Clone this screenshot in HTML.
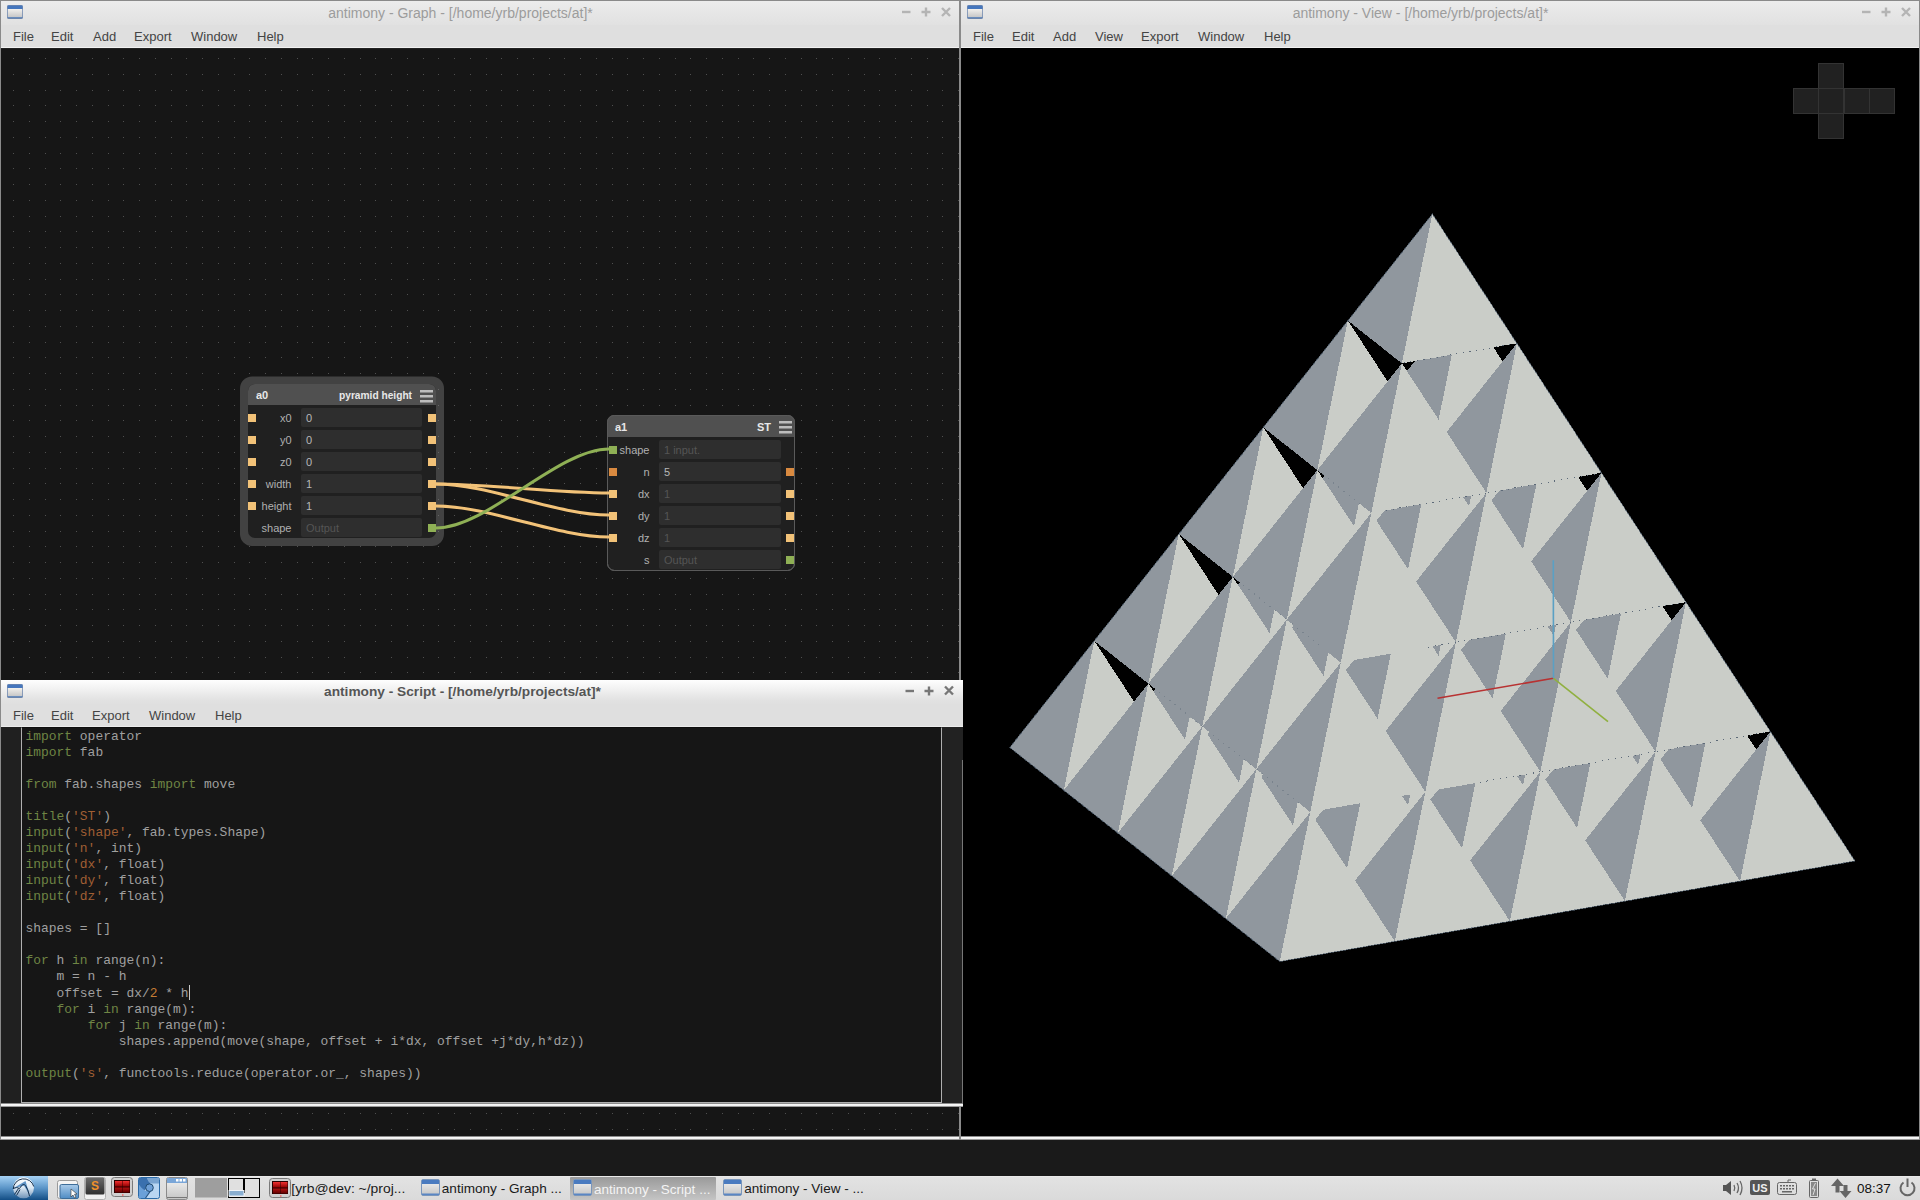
<!DOCTYPE html>
<html><head><meta charset="utf-8">
<style>
*{box-sizing:border-box;margin:0;padding:0}
html,body{width:1920px;height:1200px;overflow:hidden;background:#1a1a1a;font-family:"Liberation Sans",sans-serif;position:relative}
.abs{position:absolute}
.win{position:absolute;background:#dfdfdf;overflow:hidden}
.title{position:absolute;left:0;right:0;top:0;height:24px;background:linear-gradient(#ececec,#e1e1e1)}
.menu{position:absolute;left:0;right:0;top:24px;height:23px;background:#dfdfdf;border-bottom:1px solid #f2f2f2}
.ticon{position:absolute;left:6px;top:4px;width:16px;height:14px;border-radius:2px;background:linear-gradient(#4576bd 0,#4576bd 4px,#f2f0ec 4px,#c8c8c8 12px,#6a92c8 12px,#6a7c96 14px);box-shadow:0 0 0 1px rgba(110,135,175,0.75) inset}
.ttext{position:absolute;top:4px;left:24px;right:63px;text-align:center;font-size:14px;line-height:16px;color:#9c9c9c;white-space:nowrap}
.tb{position:absolute;top:0;width:16px;height:24px}
.mi{position:absolute;top:4px;font-size:13px;line-height:15px;color:#444}
.handle{position:absolute;left:0;right:0;height:4px;background:linear-gradient(#8c8c8c 0,#8c8c8c 1px,#fafafa 1px,#f0f0f0 3px,#9a9a9a 3px)}
pre.code{position:absolute;left:25.5px;top:729px;font-family:"Liberation Mono",monospace;font-size:12.95px;line-height:16px;color:#c6c6c6;white-space:pre}
.cur{display:inline-block;width:1px;height:15px;background:#c8c8c8;vertical-align:-3px}
</style></head>
<body>
<!-- Graph window -->
<div class="win" style="left:0;top:0;width:960px;height:1140px;border-left:1px solid #8a8a8a;border-top:1px solid #8a8a8a;border-right:1px solid #8a8a8a">
  <div class="title"><div class="ticon"></div><div class="ttext">antimony - Graph - [/home/yrb/projects/at]*</div>
    <svg class="abs" style="left:896px;top:3px" width="60" height="18"><g stroke="#b4b4b4" stroke-width="2.4" fill="none"><path d="M5 8h8.5"/><path d="M29 3.5v9M24.5 8h9"/><path d="M45 4l8 8M53 4l-8 8"/></g></svg>
  </div>
  <div class="menu">
    <span class="mi" style="left:12px">File</span><span class="mi" style="left:50px">Edit</span><span class="mi" style="left:92px">Add</span><span class="mi" style="left:133px">Export</span><span class="mi" style="left:190px">Window</span><span class="mi" style="left:256px">Help</span>
  </div>
  <div class="handle" style="top:1135px"></div>
</div>
<svg class="abs" style="left:0;top:0" width="960" height="1136" font-family="Liberation Sans, sans-serif">
<defs><pattern id="dots" x="13" y="58" width="63" height="63" patternUnits="userSpaceOnUse"><rect x="0" y="0" width="1" height="1" fill="#505050"/><rect x="0" y="16" width="1" height="1" fill="#505050"/><rect x="0" y="32" width="1" height="1" fill="#505050"/><rect x="0" y="47" width="1" height="1" fill="#505050"/><rect x="16" y="0" width="1" height="1" fill="#505050"/><rect x="16" y="16" width="1" height="1" fill="#505050"/><rect x="16" y="32" width="1" height="1" fill="#505050"/><rect x="16" y="47" width="1" height="1" fill="#505050"/><rect x="32" y="0" width="1" height="1" fill="#505050"/><rect x="32" y="16" width="1" height="1" fill="#505050"/><rect x="32" y="32" width="1" height="1" fill="#505050"/><rect x="32" y="47" width="1" height="1" fill="#505050"/><rect x="47" y="0" width="1" height="1" fill="#505050"/><rect x="47" y="16" width="1" height="1" fill="#505050"/><rect x="47" y="32" width="1" height="1" fill="#505050"/><rect x="47" y="47" width="1" height="1" fill="#505050"/></pattern></defs>
<rect x="1" y="48" width="958" height="1088" fill="#161616"/>
<rect x="1" y="48" width="958" height="1" fill="#222"/>
<rect x="1" y="49" width="958" height="1087" fill="url(#dots)"/>
<rect x="240.0" y="376.5" width="204.0" height="169.5" rx="12" fill="rgba(128,128,128,0.42)"/>
<rect x="248" y="384" width="188" height="154" rx="7" fill="#202020"/>

<clipPath id="ca0"><rect x="248" y="384" width="188" height="154" rx="7"/></clipPath>
<rect x="248" y="384" width="188" height="21" fill="#505050" clip-path="url(#ca0)"/>
<text x="256.0" y="399.0" font-size="11" font-weight="bold" fill="#e8e8e8">a0</text>
<text x="412.0" y="399.0" font-size="11" font-weight="bold" fill="#e8e8e8" text-anchor="end" textLength="73" lengthAdjust="spacingAndGlyphs">pyramid height</text>
<rect x="420" y="390" width="13" height="2.5" fill="#bdbdbd"/>
<rect x="420" y="395" width="13" height="2.5" fill="#bdbdbd"/>
<rect x="420" y="400" width="13" height="2.5" fill="#bdbdbd"/>
<rect x="301" y="408" width="121" height="19" rx="2" fill="#2e2e2e"/>
<text x="291.5" y="421.5" font-size="11" fill="#b0b0b0" text-anchor="end">x0</text>
<text x="306.0" y="421.5" font-size="11" fill="#b8b8b8">0</text>
<rect x="248" y="414" width="8" height="8" fill="#f2c278"/>
<rect x="428" y="414" width="8" height="8" fill="#f2c278"/>
<rect x="301" y="430" width="121" height="19" rx="2" fill="#2e2e2e"/>
<text x="291.5" y="443.5" font-size="11" fill="#b0b0b0" text-anchor="end">y0</text>
<text x="306.0" y="443.5" font-size="11" fill="#b8b8b8">0</text>
<rect x="248" y="436" width="8" height="8" fill="#f2c278"/>
<rect x="428" y="436" width="8" height="8" fill="#f2c278"/>
<rect x="301" y="452" width="121" height="19" rx="2" fill="#2e2e2e"/>
<text x="291.5" y="465.5" font-size="11" fill="#b0b0b0" text-anchor="end">z0</text>
<text x="306.0" y="465.5" font-size="11" fill="#b8b8b8">0</text>
<rect x="248" y="458" width="8" height="8" fill="#f2c278"/>
<rect x="428" y="458" width="8" height="8" fill="#f2c278"/>
<rect x="301" y="474" width="121" height="19" rx="2" fill="#2e2e2e"/>
<text x="291.5" y="487.5" font-size="11" fill="#b0b0b0" text-anchor="end">width</text>
<text x="306.0" y="487.5" font-size="11" fill="#b8b8b8">1</text>
<rect x="248" y="480" width="8" height="8" fill="#f2c278"/>
<rect x="428" y="480" width="8" height="8" fill="#f2c278"/>
<rect x="301" y="496" width="121" height="19" rx="2" fill="#2e2e2e"/>
<text x="291.5" y="509.5" font-size="11" fill="#b0b0b0" text-anchor="end">height</text>
<text x="306.0" y="509.5" font-size="11" fill="#b8b8b8">1</text>
<rect x="248" y="502" width="8" height="8" fill="#f2c278"/>
<rect x="428" y="502" width="8" height="8" fill="#f2c278"/>
<rect x="301" y="518" width="121" height="19" rx="2" fill="#2e2e2e"/>
<text x="291.5" y="531.5" font-size="11" fill="#b0b0b0" text-anchor="end">shape</text>
<text x="306.0" y="531.5" font-size="11" fill="#555">Output</text>
<rect x="428" y="524" width="8" height="8" fill="#8fb055"/>
<rect x="607.5" y="415.5" width="187.0" height="155.0" rx="7" fill="#202020" stroke="#5a5a5a" stroke-width="1"/>

<clipPath id="ca1"><rect x="607" y="415" width="188" height="156" rx="7"/></clipPath>
<rect x="607" y="415" width="188" height="22" fill="#505050" clip-path="url(#ca1)"/>
<rect x="607.5" y="415.5" width="187.0" height="155.0" rx="7" fill="none" stroke="#5a5a5a" stroke-width="1"/>
<text x="615.0" y="431.0" font-size="11" font-weight="bold" fill="#e8e8e8">a1</text>
<text x="771.0" y="431.0" font-size="11" font-weight="bold" fill="#e8e8e8" text-anchor="end">ST</text>
<rect x="779" y="421" width="13" height="2.5" fill="#bdbdbd"/>
<rect x="779" y="426" width="13" height="2.5" fill="#bdbdbd"/>
<rect x="779" y="431" width="13" height="2.5" fill="#bdbdbd"/>
<rect x="659" y="440" width="122" height="19" rx="2" fill="#2e2e2e"/>
<text x="649.5" y="453.5" font-size="11" fill="#b0b0b0" text-anchor="end">shape</text>
<text x="664.0" y="453.5" font-size="11" fill="#555">1 input.</text>
<rect x="609" y="446" width="8" height="8" fill="#8fb055"/>
<rect x="659" y="462" width="122" height="19" rx="2" fill="#2e2e2e"/>
<text x="649.5" y="475.5" font-size="11" fill="#b0b0b0" text-anchor="end">n</text>
<text x="664.0" y="475.5" font-size="11" fill="#b8b8b8">5</text>
<rect x="609" y="468" width="8" height="8" fill="#d98a40"/>
<rect x="786" y="468" width="8" height="8" fill="#d98a40"/>
<rect x="659" y="484" width="122" height="19" rx="2" fill="#2e2e2e"/>
<text x="649.5" y="497.5" font-size="11" fill="#b0b0b0" text-anchor="end">dx</text>
<text x="664.0" y="497.5" font-size="11" fill="#555">1</text>
<rect x="609" y="490" width="8" height="8" fill="#f2c278"/>
<rect x="786" y="490" width="8" height="8" fill="#f2c278"/>
<rect x="659" y="506" width="122" height="19" rx="2" fill="#2e2e2e"/>
<text x="649.5" y="519.5" font-size="11" fill="#b0b0b0" text-anchor="end">dy</text>
<text x="664.0" y="519.5" font-size="11" fill="#555">1</text>
<rect x="609" y="512" width="8" height="8" fill="#f2c278"/>
<rect x="786" y="512" width="8" height="8" fill="#f2c278"/>
<rect x="659" y="528" width="122" height="19" rx="2" fill="#2e2e2e"/>
<text x="649.5" y="541.5" font-size="11" fill="#b0b0b0" text-anchor="end">dz</text>
<text x="664.0" y="541.5" font-size="11" fill="#555">1</text>
<rect x="609" y="534" width="8" height="8" fill="#f2c278"/>
<rect x="786" y="534" width="8" height="8" fill="#f2c278"/>
<rect x="659" y="550" width="122" height="19" rx="2" fill="#2e2e2e"/>
<text x="649.5" y="563.5" font-size="11" fill="#b0b0b0" text-anchor="end">s</text>
<text x="664.0" y="563.5" font-size="11" fill="#555">Output</text>
<rect x="786" y="556" width="8" height="8" fill="#8fb055"/>
<path d="M436.0 484.0 C487.9 484.0 557.1 493.0 609.0 493.0" fill="none" stroke="#f2c278" stroke-width="3"/>
<path d="M436.0 484.0 C487.9 484.0 557.1 515.0 609.0 515.0" fill="none" stroke="#f2c278" stroke-width="3"/>
<path d="M436.0 506.0 C487.9 506.0 557.1 537.0 609.0 537.0" fill="none" stroke="#f2c278" stroke-width="3"/>
<path d="M436.0 528.0 C487.9 528.0 557.1 449.0 609.0 449.0" fill="none" stroke="#8fb055" stroke-width="3"/>
</svg>
<!-- View window -->
<div class="win" style="left:960px;top:0;width:960px;height:1140px;border-left:1px solid #8a8a8a;border-top:1px solid #8a8a8a;border-right:1px solid #8a8a8a">
  <div class="title"><div class="ticon"></div><div class="ttext">antimony - View - [/home/yrb/projects/at]*</div>
    <svg class="abs" style="left:896px;top:3px" width="60" height="18"><g stroke="#b4b4b4" stroke-width="2.4" fill="none"><path d="M5 8h8.5"/><path d="M29 3.5v9M24.5 8h9"/><path d="M45 4l8 8M53 4l-8 8"/></g></svg>
  </div>
  <div class="menu">
    <span class="mi" style="left:12px">File</span><span class="mi" style="left:51px">Edit</span><span class="mi" style="left:92px">Add</span><span class="mi" style="left:134px">View</span><span class="mi" style="left:180px">Export</span><span class="mi" style="left:237px">Window</span><span class="mi" style="left:303px">Help</span>
  </div>
  <div class="abs" style="left:0;top:47px;width:958px;height:1088px;background:#000"></div>
  <div class="handle" style="top:1135px"></div>
</div>
<svg class="abs" style="left:961px;top:48px" width="958" height="1088" viewBox="961 48 958 1088" shape-rendering="crispEdges">
<polygon fill="#90979e" points="1470.0,667.0 1524.0,709.8 1554.5,560.4"/>
<polygon fill="#cacdc8" points="1639.0,689.8 1524.0,709.8 1554.5,560.4"/>
<polygon fill="#90979e" points="1354.9,687.1 1408.9,729.9 1439.5,580.5"/>
<polygon fill="#cacdc8" points="1524.0,709.8 1408.9,729.9 1439.5,580.5"/>
<polygon fill="#90979e" points="1239.9,707.2 1293.9,750.0 1324.4,600.6"/>
<polygon fill="#cacdc8" points="1408.9,729.9 1293.9,750.0 1324.4,600.6"/>
<polygon fill="#90979e" points="1524.0,709.8 1578.0,752.6 1608.5,603.1"/>
<polygon fill="#cacdc8" points="1693.0,732.5 1578.0,752.6 1608.5,603.1"/>
<polygon fill="#90979e" points="1439.5,580.5 1493.5,623.2 1524.0,473.7"/>
<polygon fill="#cacdc8" points="1608.5,603.1 1493.5,623.2 1524.0,473.7"/>
<polygon fill="#90979e" points="1124.8,727.4 1178.8,770.1 1209.3,620.6"/>
<polygon fill="#cacdc8" points="1293.9,750.0 1178.8,770.1 1209.3,620.6"/>
<polygon fill="#90979e" points="1408.9,729.9 1462.9,772.8 1493.5,623.2"/>
<polygon fill="#cacdc8" points="1578.0,752.6 1462.9,772.8 1493.5,623.2"/>
<polygon fill="#90979e" points="1324.4,600.6 1378.4,643.4 1408.9,493.8"/>
<polygon fill="#cacdc8" points="1493.5,623.2 1378.4,643.4 1408.9,493.8"/>
<polygon fill="#90979e" points="1009.8,747.5 1063.8,790.2 1094.3,640.8"/>
<polygon fill="#cacdc8" points="1178.8,770.1 1063.8,790.2 1094.3,640.8"/>
<polygon fill="#90979e" points="1293.9,750.0 1347.9,792.8 1378.4,643.4"/>
<polygon fill="#cacdc8" points="1462.9,772.8 1347.9,792.8 1378.4,643.4"/>
<polygon fill="#90979e" points="1578.0,752.6 1632.0,795.4 1662.5,646.0"/>
<polygon fill="#cacdc8" points="1747.0,775.4 1632.0,795.4 1662.5,646.0"/>
<polygon fill="#90979e" points="1209.3,620.6 1263.3,663.4 1293.9,513.9"/>
<polygon fill="#cacdc8" points="1378.4,643.4 1263.3,663.4 1293.9,513.9"/>
<polygon fill="#90979e" points="1493.5,623.2 1547.5,666.1 1578.0,516.5"/>
<polygon fill="#cacdc8" points="1662.5,646.0 1547.5,666.1 1578.0,516.5"/>
<polygon fill="#90979e" points="1408.9,493.8 1462.9,536.6 1493.5,387.1"/>
<polygon fill="#cacdc8" points="1578.0,516.5 1462.9,536.6 1493.5,387.1"/>
<polygon fill="#90979e" points="1178.8,770.1 1232.8,813.0 1263.3,663.4"/>
<polygon fill="#cacdc8" points="1347.9,792.8 1232.8,813.0 1263.3,663.4"/>
<polygon fill="#90979e" points="1462.9,772.8 1516.9,815.5 1547.5,666.1"/>
<polygon fill="#cacdc8" points="1632.0,795.4 1516.9,815.5 1547.5,666.1"/>
<polygon fill="#90979e" points="1094.3,640.8 1148.3,683.5 1178.8,534.0"/>
<polygon fill="#cacdc8" points="1263.3,663.4 1148.3,683.5 1178.8,534.0"/>
<path d="M1094.3 640.8L1148.3 683.5" stroke="#5d6a78" stroke-width="1" opacity="0.45" stroke-dasharray="1.2 5.5" fill="none"/>
<polygon fill="#90979e" points="1378.4,643.4 1432.4,686.2 1462.9,536.6"/>
<polygon fill="#cacdc8" points="1547.5,666.1 1432.4,686.2 1462.9,536.6"/>
<polygon fill="#90979e" points="1293.9,513.9 1347.9,556.7 1378.4,407.2"/>
<polygon fill="#cacdc8" points="1462.9,536.6 1347.9,556.7 1378.4,407.2"/>
<polygon fill="#90979e" points="1063.8,790.2 1117.8,833.0 1148.3,683.5"/>
<polygon fill="#cacdc8" points="1232.8,813.0 1117.8,833.0 1148.3,683.5"/>
<polygon fill="#90979e" points="1347.9,792.8 1401.9,835.6 1432.4,686.2"/>
<polygon fill="#cacdc8" points="1516.9,815.5 1401.9,835.6 1432.4,686.2"/>
<polygon fill="#90979e" points="1632.0,795.4 1686.0,838.2 1716.5,688.8"/>
<polygon fill="#cacdc8" points="1801.0,818.1 1686.0,838.2 1716.5,688.8"/>
<polygon fill="#90979e" points="1263.3,663.4 1317.3,706.2 1347.9,556.7"/>
<polygon fill="#cacdc8" points="1432.4,686.2 1317.3,706.2 1347.9,556.7"/>
<polygon fill="#90979e" points="1547.5,666.1 1601.5,708.9 1632.0,559.3"/>
<polygon fill="#cacdc8" points="1716.5,688.8 1601.5,708.9 1632.0,559.3"/>
<polygon fill="#90979e" points="1178.8,534.0 1232.8,576.9 1263.3,427.3"/>
<polygon fill="#cacdc8" points="1347.9,556.7 1232.8,576.9 1263.3,427.3"/>
<path d="M1178.8 534.0L1232.8 576.9" stroke="#5d6a78" stroke-width="1" opacity="0.45" stroke-dasharray="1.2 5.5" fill="none"/>
<polygon fill="#90979e" points="1462.9,536.6 1516.9,579.4 1547.5,430.0"/>
<polygon fill="#cacdc8" points="1632.0,559.3 1516.9,579.4 1547.5,430.0"/>
<polygon fill="#90979e" points="1232.8,813.0 1286.8,855.8 1317.3,706.2"/>
<polygon fill="#cacdc8" points="1401.9,835.6 1286.8,855.8 1317.3,706.2"/>
<polygon fill="#90979e" points="1516.9,815.5 1570.9,858.3 1601.5,708.9"/>
<polygon fill="#cacdc8" points="1686.0,838.2 1570.9,858.3 1601.5,708.9"/>
<polygon fill="#90979e" points="1378.4,407.2 1432.4,450.1 1462.9,300.6"/>
<polygon fill="#cacdc8" points="1547.5,430.0 1432.4,450.1 1462.9,300.6"/>
<polygon fill="#90979e" points="1148.3,683.5 1202.3,726.4 1232.8,576.9"/>
<polygon fill="#cacdc8" points="1317.3,706.2 1202.3,726.4 1232.8,576.9"/>
<path d="M1148.3 683.5L1202.3 726.4" stroke="#5d6a78" stroke-width="1" opacity="0.45" stroke-dasharray="1.2 5.5" fill="none"/>
<polygon fill="#90979e" points="1432.4,686.2 1486.4,729.0 1516.9,579.4"/>
<polygon fill="#cacdc8" points="1601.5,708.9 1486.4,729.0 1516.9,579.4"/>
<polygon fill="#90979e" points="1347.9,556.7 1401.9,599.5 1432.4,450.1"/>
<polygon fill="#cacdc8" points="1516.9,579.4 1401.9,599.5 1432.4,450.1"/>
<polygon fill="#90979e" points="1117.8,833.0 1171.8,875.9 1202.3,726.4"/>
<polygon fill="#cacdc8" points="1286.8,855.8 1171.8,875.9 1202.3,726.4"/>
<polygon fill="#90979e" points="1401.9,835.6 1455.9,878.4 1486.4,729.0"/>
<polygon fill="#cacdc8" points="1570.9,858.3 1455.9,878.4 1486.4,729.0"/>
<polygon fill="#90979e" points="1686.0,838.2 1740.0,881.0 1770.5,731.5"/>
<polygon fill="#cacdc8" points="1855.0,861.0 1740.0,881.0 1770.5,731.5"/>
<polygon fill="#90979e" points="1263.3,427.3 1317.3,470.1 1347.9,320.6"/>
<polygon fill="#cacdc8" points="1432.4,450.1 1317.3,470.1 1347.9,320.6"/>
<path d="M1263.3 427.3L1317.3 470.1" stroke="#5d6a78" stroke-width="1" opacity="0.45" stroke-dasharray="1.2 5.5" fill="none"/>
<polygon fill="#90979e" points="1317.3,706.2 1371.3,749.0 1401.9,599.5"/>
<polygon fill="#cacdc8" points="1486.4,729.0 1371.3,749.0 1401.9,599.5"/>
<polygon fill="#90979e" points="1601.5,708.9 1655.5,751.7 1686.0,602.1"/>
<polygon fill="#cacdc8" points="1770.5,731.5 1655.5,751.7 1686.0,602.1"/>
<path d="M1770.5 731.5L1655.5 751.7" stroke="#5d6a78" stroke-width="1" stroke-dasharray="1.2 5.5" fill="none"/>
<polygon fill="#90979e" points="1232.8,576.9 1286.8,619.6 1317.3,470.1"/>
<polygon fill="#cacdc8" points="1401.9,599.5 1286.8,619.6 1317.3,470.1"/>
<path d="M1232.8 576.9L1286.8 619.6" stroke="#5d6a78" stroke-width="1" opacity="0.45" stroke-dasharray="1.2 5.5" fill="none"/>
<polygon fill="#90979e" points="1516.9,579.4 1570.9,622.2 1601.5,472.8"/>
<polygon fill="#cacdc8" points="1686.0,602.1 1570.9,622.2 1601.5,472.8"/>
<path d="M1686.0 602.1L1570.9 622.2" stroke="#5d6a78" stroke-width="1" stroke-dasharray="1.2 5.5" fill="none"/>
<polygon fill="#90979e" points="1286.8,855.8 1340.8,898.5 1371.3,749.0"/>
<polygon fill="#cacdc8" points="1455.9,878.4 1340.8,898.5 1371.3,749.0"/>
<polygon fill="#90979e" points="1570.9,858.3 1624.9,901.1 1655.5,751.7"/>
<polygon fill="#cacdc8" points="1740.0,881.0 1624.9,901.1 1655.5,751.7"/>
<polygon fill="#90979e" points="1432.4,450.1 1486.4,492.9 1516.9,343.3"/>
<polygon fill="#cacdc8" points="1601.5,472.8 1486.4,492.9 1516.9,343.3"/>
<path d="M1601.5 472.8L1486.4 492.9" stroke="#5d6a78" stroke-width="1" stroke-dasharray="1.2 5.5" fill="none"/>
<polygon fill="#90979e" points="1202.3,726.4 1256.3,769.1 1286.8,619.6"/>
<polygon fill="#cacdc8" points="1371.3,749.0 1256.3,769.1 1286.8,619.6"/>
<path d="M1202.3 726.4L1256.3 769.1" stroke="#5d6a78" stroke-width="1" opacity="0.45" stroke-dasharray="1.2 5.5" fill="none"/>
<polygon fill="#90979e" points="1486.4,729.0 1540.4,771.8 1570.9,622.2"/>
<polygon fill="#cacdc8" points="1655.5,751.7 1540.4,771.8 1570.9,622.2"/>
<path d="M1655.5 751.7L1540.4 771.8" stroke="#5d6a78" stroke-width="1" stroke-dasharray="1.2 5.5" fill="none"/>
<polygon fill="#90979e" points="1347.9,320.6 1401.9,363.4 1432.4,214.0"/>
<polygon fill="#cacdc8" points="1516.9,343.3 1401.9,363.4 1432.4,214.0"/>
<path d="M1516.9 343.3L1401.9 363.4" stroke="#5d6a78" stroke-width="1" stroke-dasharray="1.2 5.5" fill="none"/>
<path d="M1347.9 320.6L1401.9 363.4" stroke="#5d6a78" stroke-width="1" opacity="0.45" stroke-dasharray="1.2 5.5" fill="none"/>
<polygon fill="#90979e" points="1401.9,599.5 1455.9,642.3 1486.4,492.9"/>
<polygon fill="#cacdc8" points="1570.9,622.2 1455.9,642.3 1486.4,492.9"/>
<path d="M1570.9 622.2L1455.9 642.3" stroke="#5d6a78" stroke-width="1" stroke-dasharray="1.2 5.5" fill="none"/>
<polygon fill="#90979e" points="1171.8,875.9 1225.8,918.6 1256.3,769.1"/>
<polygon fill="#cacdc8" points="1340.8,898.5 1225.8,918.6 1256.3,769.1"/>
<polygon fill="#90979e" points="1455.9,878.4 1509.9,921.2 1540.4,771.8"/>
<polygon fill="#cacdc8" points="1624.9,901.1 1509.9,921.2 1540.4,771.8"/>
<polygon fill="#90979e" points="1317.3,470.1 1371.3,512.9 1401.9,363.4"/>
<polygon fill="#cacdc8" points="1486.4,492.9 1371.3,512.9 1401.9,363.4"/>
<path d="M1486.4 492.9L1381.7 511.1" stroke="#5d6a78" stroke-width="1" stroke-dasharray="1.2 5.5" fill="none"/>
<path d="M1317.3 470.1L1371.3 512.9" stroke="#5d6a78" stroke-width="1" opacity="0.45" stroke-dasharray="1.2 5.5" fill="none"/>
<polygon fill="#90979e" points="1371.3,749.0 1425.3,791.8 1455.9,642.3"/>
<polygon fill="#cacdc8" points="1540.4,771.8 1425.3,791.8 1455.9,642.3"/>
<path d="M1540.4 771.8L1474.8 783.2" stroke="#5d6a78" stroke-width="1" stroke-dasharray="1.2 5.5" fill="none"/>
<polygon fill="#90979e" points="1286.8,619.6 1340.8,662.4 1371.3,512.9"/>
<polygon fill="#cacdc8" points="1455.9,642.3 1340.8,662.4 1371.3,512.9"/>
<path d="M1455.9 642.3L1428.3 647.2" stroke="#5d6a78" stroke-width="1" stroke-dasharray="1.2 5.5" fill="none"/>
<path d="M1286.8 619.6L1340.8 662.4" stroke="#5d6a78" stroke-width="1" opacity="0.45" stroke-dasharray="1.2 5.5" fill="none"/>
<polygon fill="#90979e" points="1340.8,898.5 1394.8,941.4 1425.3,791.8"/>
<polygon fill="#cacdc8" points="1509.9,921.2 1394.8,941.4 1425.3,791.8"/>
<polygon fill="#90979e" points="1256.3,769.1 1310.3,812.0 1340.8,662.4"/>
<polygon fill="#cacdc8" points="1425.3,791.8 1310.3,812.0 1340.8,662.4"/>
<path d="M1256.3 769.1L1310.3 812.0" stroke="#5d6a78" stroke-width="1" opacity="0.45" stroke-dasharray="1.2 5.5" fill="none"/>
<polygon fill="#90979e" points="1225.8,918.6 1279.8,961.5 1310.3,812.0"/>
<polygon fill="#cacdc8" points="1394.8,941.4 1279.8,961.5 1310.3,812.0"/>
<polygon points="1855.0,861.0 1279.8,961.5 1009.8,747.5 1432.4,214.0" fill="none" stroke="#52616f" stroke-width="1" stroke-opacity="0.6"/>
<path d="M1553.5 678.3L1437.5 698.3" stroke="#b83232" stroke-width="1.6" shape-rendering="auto"/>
<path d="M1553.5 678.3L1553.3 560.3" stroke="#5aa0c4" stroke-width="1.6" shape-rendering="auto"/>
<path d="M1553.5 678.3L1608 721.7" stroke="#90b040" stroke-width="1.6" shape-rendering="auto"/>
<rect x="1818.5" y="63.5" width="25" height="25" fill="#212121" stroke="#333" stroke-width="1"/>
<rect x="1793.5" y="88.5" width="25" height="25" fill="#212121" stroke="#333" stroke-width="1"/>
<rect x="1818.5" y="88.5" width="25" height="25" fill="#212121" stroke="#333" stroke-width="1"/>
<rect x="1844.5" y="88.5" width="25" height="25" fill="#212121" stroke="#333" stroke-width="1"/>
<rect x="1869.5" y="88.5" width="25" height="25" fill="#212121" stroke="#333" stroke-width="1"/>
<rect x="1818.5" y="113.5" width="25" height="25" fill="#212121" stroke="#333" stroke-width="1"/>
</svg>
<!-- Script window -->
<div class="win" style="left:0;top:680px;width:963px;height:427px;border-left:1px solid #8a8a8a">
  <div class="title" style="background:linear-gradient(#fefefe,#e2e2e2 20px,#e0e0e0)"><div class="ticon"></div><div class="ttext" style="color:#555;font-weight:bold;font-size:13.7px">antimony - Script - [/home/yrb/projects/at]*</div>
    <svg class="abs" style="left:899px;top:2px" width="60" height="18"><g stroke="#777" stroke-width="2.4" fill="none"><path d="M5.5 9h8.5"/><path d="M29 4.5v9M24.5 9h9"/><path d="M45 4.5l8 8M53 4.5l-8 8"/></g></svg>
  </div>
  <div class="menu" style="height:23px;border-bottom-color:#ececec">
    <span class="mi" style="left:12px">File</span><span class="mi" style="left:50px">Edit</span><span class="mi" style="left:91px">Export</span><span class="mi" style="left:148px">Window</span><span class="mi" style="left:214px">Help</span>
  </div>
  <div class="abs" style="left:0;top:47px;width:21px;height:376px;background:#202020"></div>
  <div class="abs" style="left:20px;top:47px;width:921px;height:376px;background:#161616;border-left:1px solid #b0b0b0;border-bottom:1px solid #b0b0b0;border-right:1px solid #b0b0b0;border-top:1px solid #0e0e0e"></div>
  <div class="abs" style="left:941px;top:47px;width:21px;height:377px;background:#222"></div>
  <div class="abs" style="left:961px;top:80px;width:2px;height:343px;background:#777"></div>
  <div class="handle" style="top:423px"></div>
</div>
<pre class="code"><span style="color:#6f8544">import</span><span style="color:#a0a0a0"> operator</span>
<span style="color:#6f8544">import</span><span style="color:#a0a0a0"> fab</span>

<span style="color:#6f8544">from</span><span style="color:#a0a0a0"> fab.shapes </span><span style="color:#6f8544">import</span><span style="color:#a0a0a0"> move</span>

<span style="color:#6f8544">title</span><span style="color:#a0a0a0">(</span><span style="color:#a05f34">&#x27;ST&#x27;</span><span style="color:#a0a0a0">)</span>
<span style="color:#6f8544">input</span><span style="color:#a0a0a0">(</span><span style="color:#a05f34">&#x27;shape&#x27;</span><span style="color:#a0a0a0">, fab.types.Shape)</span>
<span style="color:#6f8544">input</span><span style="color:#a0a0a0">(</span><span style="color:#a05f34">&#x27;n&#x27;</span><span style="color:#a0a0a0">, int)</span>
<span style="color:#6f8544">input</span><span style="color:#a0a0a0">(</span><span style="color:#a05f34">&#x27;dx&#x27;</span><span style="color:#a0a0a0">, float)</span>
<span style="color:#6f8544">input</span><span style="color:#a0a0a0">(</span><span style="color:#a05f34">&#x27;dy&#x27;</span><span style="color:#a0a0a0">, float)</span>
<span style="color:#6f8544">input</span><span style="color:#a0a0a0">(</span><span style="color:#a05f34">&#x27;dz&#x27;</span><span style="color:#a0a0a0">, float)</span>

<span style="color:#a0a0a0">shapes = []</span>

<span style="color:#6f8544">for</span><span style="color:#a0a0a0"> h </span><span style="color:#6f8544">in</span><span style="color:#a0a0a0"> range(n):</span>
<span style="color:#a0a0a0">    m = n - h</span>
<span style="color:#a0a0a0">    offset = dx/</span><span style="color:#c47c34">2</span><span style="color:#a0a0a0"> * h</span><span class="cur"></span>
<span style="color:#a0a0a0">    </span><span style="color:#6f8544">for</span><span style="color:#a0a0a0"> i </span><span style="color:#6f8544">in</span><span style="color:#a0a0a0"> range(m):</span>
<span style="color:#a0a0a0">        </span><span style="color:#6f8544">for</span><span style="color:#a0a0a0"> j </span><span style="color:#6f8544">in</span><span style="color:#a0a0a0"> range(m):</span>
<span style="color:#a0a0a0">            shapes.append(move(shape, offset + i*dx, offset +j*dy,h*dz))</span>

<span style="color:#6f8544">output</span><span style="color:#a0a0a0">(</span><span style="color:#a05f34">&#x27;s&#x27;</span><span style="color:#a0a0a0">, functools.reduce(operator.or_, shapes))</span></pre>
<!-- Taskbar -->
<svg class="abs" style="left:0;top:1176px" width="1920" height="24" font-family="Liberation Sans, sans-serif">
<defs><linearGradient id="tbg" x1="0" y1="0" x2="0" y2="1"><stop offset="0" stop-color="#ededed"/><stop offset="0.06" stop-color="#e2e2e2"/><stop offset="1" stop-color="#dadada"/></linearGradient><linearGradient id="start" x1="0" y1="0" x2="0" y2="1"><stop offset="0" stop-color="#a6d2f5"/><stop offset="0.5" stop-color="#5b95c8"/><stop offset="1" stop-color="#134e85"/></linearGradient><linearGradient id="lx" x1="0" y1="0" x2="0" y2="1"><stop offset="0" stop-color="#ffffff"/><stop offset="0.5" stop-color="#dce8f3"/><stop offset="1" stop-color="#6f93b8"/></linearGradient><linearGradient id="press" x1="0" y1="0" x2="0" y2="1"><stop offset="0" stop-color="#9a9a9a"/><stop offset="1" stop-color="#c4c4c4"/></linearGradient><linearGradient id="winic" x1="0" y1="0" x2="0" y2="1"><stop offset="0" stop-color="#f4f4f4"/><stop offset="1" stop-color="#c4c4c4"/></linearGradient><linearGradient id="fold" x1="0" y1="0" x2="0" y2="1"><stop offset="0" stop-color="#a9cbea"/><stop offset="1" stop-color="#4f8cc4"/></linearGradient><linearGradient id="subl" x1="0" y1="0" x2="0" y2="1"><stop offset="0" stop-color="#6a6a6a"/><stop offset="1" stop-color="#2e2e2e"/></linearGradient><linearGradient id="redc" x1="0" y1="0" x2="0" y2="1"><stop offset="0" stop-color="#f03030"/><stop offset="1" stop-color="#900000"/></linearGradient><linearGradient id="redc2" x1="0" y1="0" x2="0" y2="1"><stop offset="0" stop-color="#b01010"/><stop offset="1" stop-color="#600000"/></linearGradient></defs>
<rect x="0" y="0" width="1920" height="24" fill="url(#tbg)"/>
<rect x="0" y="0" width="48" height="24" fill="url(#start)"/>
<circle cx="23.5" cy="11.8" r="10.5" fill="url(#lx)"/>
<path d="M13.2 13 A10.5 10.5 0 0 1 33.8 10.5" stroke="#17324f" stroke-width="1" fill="none"/>
<path d="M13 12.5 L25.5 5 L30 20 L24 9.5 Z" fill="#5f94c6"/>
<path d="M13 12.5 Q17 10.5 19.5 12.5 Q23 6.5 25.5 9.5 Q28 13 29.5 20" stroke="#17324f" stroke-width="1" fill="none"/>
<path d="M18.5 12.5 L14.5 18.5 M20 13.5 L16.5 19.5" stroke="#17324f" stroke-width="1" fill="none"/>
<rect x="57.5" y="4.5" width="20" height="18" rx="2" fill="#f4f4f4" stroke="#9a9a9a"/>
<rect x="60" y="8.5" width="18.5" height="14" rx="1.5" fill="url(#fold)" stroke="#3d6d9a"/>
<path d="M71 13 l0 8 l2 -2 l1.5 3 l1.5 -0.8 l-1.5 -3 l2.5 -0.2z" fill="#fff" stroke="#333" stroke-width="0.6"/>
<rect x="84.5" y="1.5" width="21" height="22" rx="2" fill="#f0f0f0" stroke="#b0b0b0"/>
<rect x="85.5" y="1.5" width="19" height="17" rx="1.5" fill="url(#subl)"/>
<text x="95" y="14" font-size="12" font-weight="bold" fill="#f0902a" text-anchor="middle">S</text>
<rect x="111.5" y="1.5" width="21" height="19" rx="3" fill="#d0d0d0" stroke="#7a7a7a"/><rect x="114.0" y="4.0" width="16" height="13" fill="#2a0000"/><rect x="115.0" y="5.0" width="7" height="5.5" fill="url(#redc)"/><rect x="122.5" y="5.0" width="7" height="5.5" fill="url(#redc)"/><rect x="115.0" y="11.5" width="7" height="5" fill="url(#redc2)"/><rect x="122.5" y="11.5" width="7" height="5" fill="url(#redc2)"/><rect x="122.0" y="18.5" width="1.5" height="1" fill="#f33"/>
<rect x="138.5" y="1.5" width="21" height="21" rx="2" fill="#b9d6f2" stroke="#2a6aa8"/>
<path d="M139 9 Q141 12 144.5 14.5 L150 15.5 L146 22 H139 Z" fill="#6aa0d8"/>
<path d="M147 2 H159 V7.5 H150.5 Q148 6 147 2 Z" fill="#7aa4d0"/>
<path d="M139 2 H147 Q148 6 150.5 7.5 L144.5 14.5 Q141 12 139 9 Z" fill="#3a70ae"/>
<path d="M150.5 15 L145.5 22" stroke="#2a5580" stroke-width="1.2"/>
<circle cx="149.5" cy="11.7" r="3.8" fill="#6e9fd6" stroke="#1f4a70" stroke-width="1"/>
<rect x="166.5" y="1.5" width="21" height="22" rx="2" fill="url(#winic)" stroke="#8a8a8a"/>
<rect x="167" y="2" width="20" height="5" fill="#7aa6d8"/>
<rect x="176" y="3" width="2.5" height="2.5" fill="#fff"/><rect x="179.5" y="3" width="2.5" height="2.5" fill="#fff"/><rect x="183" y="3" width="2.5" height="2.5" fill="#fff"/>
<rect x="167" y="21" width="20" height="1" fill="#777"/>
<rect x="195" y="2" width="32" height="19.5" fill="#9e9e9e"/>
<rect x="228.5" y="2.5" width="31" height="19" fill="#e0e0e0" stroke="#000"/>
<rect x="243" y="2" width="2" height="15" fill="#000"/>
<rect x="229" y="14.5" width="15" height="5.5" fill="#8aaed0" stroke="#fff" stroke-width="0.8"/>
<rect x="269.5" y="2.5" width="21" height="19" rx="3" fill="#d0d0d0" stroke="#7a7a7a"/><rect x="272.0" y="5.0" width="16" height="13" fill="#2a0000"/><rect x="273.0" y="6.0" width="7" height="5.5" fill="url(#redc)"/><rect x="280.5" y="6.0" width="7" height="5.5" fill="url(#redc)"/><rect x="273.0" y="12.5" width="7" height="5" fill="url(#redc2)"/><rect x="280.5" y="12.5" width="7" height="5" fill="url(#redc2)"/><rect x="280.0" y="19.5" width="1.5" height="1" fill="#f33"/>
<text x="291.3" y="17" font-size="13.5" textLength="114" lengthAdjust="spacingAndGlyphs" fill="#1a1a1a">[yrb@dev: ~/proj...</text>
<rect x="421.5" y="3.5" width="18" height="16" rx="1.5" fill="url(#winic)" stroke="#7a96bb"/><rect x="422.0" y="4.0" width="17" height="4" fill="#4a7bc0"/><rect x="422.0" y="17.5" width="17" height="1.5" fill="#5a86c4"/>
<text x="441.8" y="17" font-size="13.5" textLength="120" lengthAdjust="spacingAndGlyphs" fill="#1a1a1a">antimony - Graph ...</text>
<rect x="570" y="1" width="146" height="23" rx="1" fill="url(#press)"/>
<rect x="573.5" y="3.5" width="18" height="16" rx="1.5" fill="url(#winic)" stroke="#7a96bb"/><rect x="574.0" y="4.0" width="17" height="4" fill="#4a7bc0"/><rect x="574.0" y="17.5" width="17" height="1.5" fill="#5a86c4"/>
<text x="594" y="18" font-size="13.5" textLength="116.4" lengthAdjust="spacingAndGlyphs" fill="#f4f4f4">antimony - Script ...</text>
<rect x="723.5" y="3.5" width="18" height="16" rx="1.5" fill="url(#winic)" stroke="#7a96bb"/><rect x="724.0" y="4.0" width="17" height="4" fill="#4a7bc0"/><rect x="724.0" y="17.5" width="17" height="1.5" fill="#5a86c4"/>
<text x="744.3" y="17" font-size="13.5" textLength="119.5" lengthAdjust="spacingAndGlyphs" fill="#1a1a1a">antimony - View - ...</text>
<path d="M1723 9 h3 l5 -4 v14 l-5 -4 h-3z" fill="#555"/>
<path d="M1734 9 q1.5 3 0 6 M1737 7 q3 5 0 10 M1740 5 q4 7 0 14" stroke="#666" stroke-width="1.3" fill="none"/>
<rect x="1750" y="4" width="20" height="15" rx="2" fill="#555"/>
<text x="1760" y="16" font-size="11" font-weight="bold" fill="#eee" text-anchor="middle">US</text>
<rect x="1777.5" y="6.5" width="19" height="12" rx="2" fill="none" stroke="#666"/>
<rect x="1780.0" y="9.0" width="2" height="1.5" fill="#666"/><rect x="1780.0" y="12.0" width="2" height="1.5" fill="#666"/><rect x="1783.0" y="9.0" width="2" height="1.5" fill="#666"/><rect x="1783.0" y="12.0" width="2" height="1.5" fill="#666"/><rect x="1786.0" y="9.0" width="2" height="1.5" fill="#666"/><rect x="1786.0" y="12.0" width="2" height="1.5" fill="#666"/><rect x="1789.0" y="9.0" width="2" height="1.5" fill="#666"/><rect x="1789.0" y="12.0" width="2" height="1.5" fill="#666"/><rect x="1792.0" y="9.0" width="2" height="1.5" fill="#666"/><rect x="1792.0" y="12.0" width="2" height="1.5" fill="#666"/>
<rect x="1782" y="15" width="10" height="1.5" fill="#666"/>
<path d="M1788 6 v-2 h3" stroke="#666" fill="none"/>
<rect x="1809.5" y="4.5" width="9" height="17" rx="1" fill="none" stroke="#666"/>
<rect x="1812" y="2.5" width="4" height="2" fill="#666"/>
<rect x="1811" y="6" width="6" height="14" fill="#888"/>
<path d="M1815.5 7 l-3 6 h2.5 l-2 6" stroke="#ddd" stroke-width="1" fill="none"/>
<path d="M1837.5 2.5 l-6.5 7.5 h4.5 v6.5 h4 v-6.5 h4.5z" fill="#666"/>
<path d="M1845.5 22 l6 -7 h-4 v-6 h-4 v6 h-4z" fill="#666"/>
<text x="1857" y="17" font-size="13.5" textLength="33.7" lengthAdjust="spacingAndGlyphs" fill="#111">08:37</text>
<path d="M1903.5 6.5 a7 7 0 1 0 8 0" stroke="#666" stroke-width="2" fill="none"/>
<path d="M1907.5 2.5 v8.5" stroke="#666" stroke-width="2"/>
</svg>
</body></html>
